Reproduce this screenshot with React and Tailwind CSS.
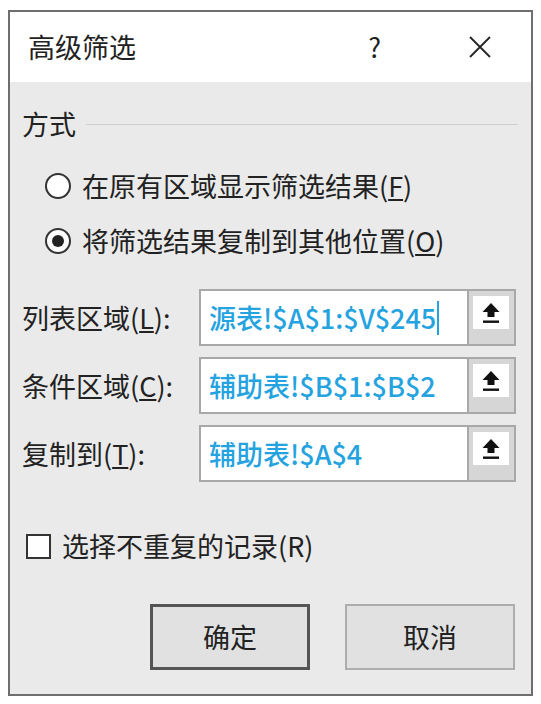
import React from 'react';

const font = { fontFamily: '"Noto Sans CJK SC", "Noto Sans", sans-serif' };

const UploadIcon = () => (
  <svg width="22" height="24" viewBox="0 0 22 24">
    <path d="M11 2 L2.5 11 H7.5 V16 H14.5 V11 H19.5 Z" fill="#111" />
    <rect x="3" y="19.5" width="16" height="2.4" fill="#111" />
  </svg>
);

const RefInput = ({ value, cursor }) => (
  <div className="flex h-[57px] w-[317px] border-2 border-[#a8a8a8]">
    <div className="flex flex-1 items-center bg-white pl-[8px] text-[27px] leading-[30px] font-medium text-[#25a3e0]">
      <span>{value}</span>
      {cursor && <span className="ml-[1px] h-[34px] w-[2px] bg-[#25a3e0]" />}
    </div>
    <div className="w-[47px] border-l-2 border-[#a8a8a8] bg-[#d6d6d6] pl-[4px] pt-[5px]">
      <div className="flex h-[33px] w-[36px] items-center justify-center bg-white">
        <UploadIcon />
      </div>
    </div>
  </div>
);

const Field = ({ label, hot, rest, value, cursor }) => (
  <div className="flex items-center">
    <div className="w-[177px] text-[27px] leading-[30px] text-[#222]">
      {label}(<span className="underline underline-offset-2">{hot}</span>){rest}
    </div>
    <RefInput value={value} cursor={cursor} />
  </div>
);

const Radio = ({ checked, children }) => (
  <div className="flex h-[30px] items-center">
    <div className="flex h-[26px] w-[26px] items-center justify-center rounded-full border-2 border-[#333] bg-white">
      {checked && <div className="h-[12px] w-[12px] rounded-full bg-[#222]" />}
    </div>
    <div className="ml-[11px] text-[27px] leading-[30px] text-[#222]">{children}</div>
  </div>
);

export default function App() {
  return (
    <div className="min-h-[704px] bg-white pl-[8px] pt-[10px]" style={font}>
      <div className="flex h-[686px] w-[525px] flex-col border-2 border-[#6e6e6e]">
        {/* Title bar */}
        <div className="flex h-[70px] items-center bg-white pl-[18px] text-[27px] leading-[30px] text-[#222]">
          <span className="flex-1">高级筛选</span>
          <span className="mr-[87px] text-[27px]">?</span>
          <svg className="mr-[39px]" width="24" height="24" viewBox="0 0 24 24">
            <path d="M2 2 L22 22 M22 2 L2 22" stroke="#222" strokeWidth="1.8" />
          </svg>
        </div>

        {/* Body */}
        <div className="flex flex-1 flex-col bg-[#eaeaea] pl-[12px] pr-[13px]">
          <div className="mt-[27px] flex h-[30px] items-center">
            <span className="text-[27px] leading-[30px] text-[#222]">方式</span>
            <div className="ml-[10px] h-px flex-1 bg-[#cfcfcf]" />
          </div>

          <div className="ml-[23px] mt-[32px] flex flex-col gap-[25px]">
            <Radio>
              在原有区域显示筛选结果(<span className="underline underline-offset-2">F</span>)
            </Radio>
            <Radio checked>
              将筛选结果复制到其他位置(<span className="underline underline-offset-2">O</span>)
            </Radio>
          </div>

          <div className="mt-[33px] flex flex-col gap-[11px]">
            <Field label="列表区域" hot="L" rest=":" value="源表!$A$1:$V$245" cursor />
            <Field label="条件区域" hot="C" rest=":" value="辅助表!$B$1:$B$2" />
            <Field label="复制到" hot="T" rest=":" value="辅助表!$A$4" />
          </div>

          <div className="mt-[49px] flex h-[30px] items-center pl-[4px]">
            <div className="h-[25px] w-[25px] border-2 border-[#333] bg-white" />
            <span className="ml-[11px] text-[27px] leading-[30px] text-[#222]">选择不重复的记录(R)</span>
          </div>

          <div className="mt-[43px] flex justify-end gap-[35px] pr-[3px]">
            <button className="h-[66px] w-[160px] border-[3px] border-[#555] bg-[#e1e1e1] text-[27px] text-[#222]">
              确定
            </button>
            <button className="h-[66px] w-[170px] border-2 border-[#adadad] bg-[#e1e1e1] text-[27px] text-[#222]">
              取消
            </button>
          </div>
        </div>
      </div>
    </div>
  );
}
